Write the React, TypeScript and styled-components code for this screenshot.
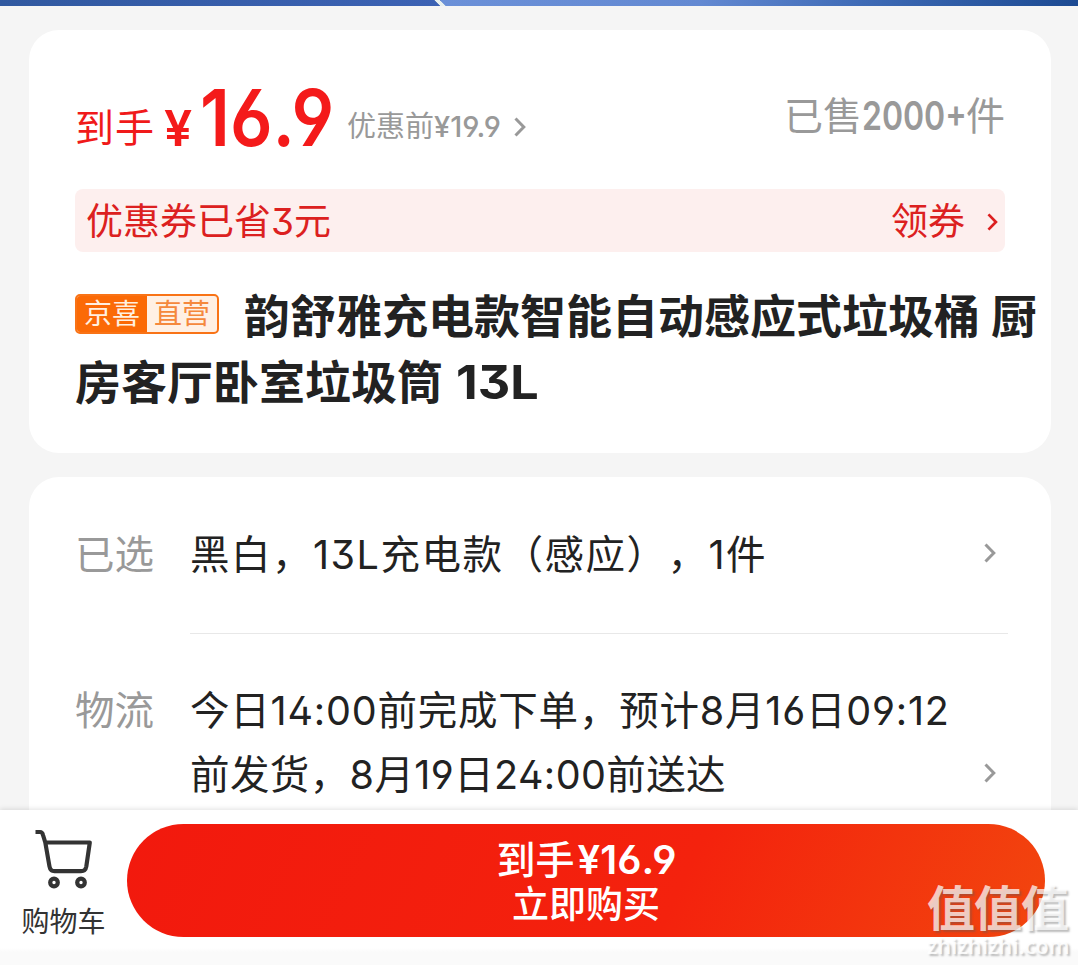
import React from "react"
import styled, { createGlobalStyle } from "styled-components"

const GlobalStyle = createGlobalStyle`
    body {
        margin: 0;
        font-family: Inter, "Noto Sans CJK SC", sans-serif;
        font-feature-settings: "ss01", "cv03", "cv04";
        text-spacing-trim: space-all;
        color: #222;
    }
    * {
        box-sizing: border-box;
    }
`
const Page = styled.div`
    display: flex;
    flex-direction: column;
    width: 1078px;
    height: 965px;
    overflow: hidden;
    position: relative;
    background-color: #f5f5f5;
`
const Banner = styled.div`
    flex: none;
    height: 6px;
    background:
        linear-gradient(45deg, transparent 34%, #e8f0ee 40%, #e8f0ee 60%, transparent 66%) 433px 0 / 14px 6px no-repeat,
        linear-gradient(90deg, #3159a0 0, #3c62b4 440px, #6b90d8 441px, #6389d2 700px, #3f6bb6 860px, #1c4a92 100%);
`
const Content = styled.main`
    flex: 1;
    min-height: 0;
    overflow: hidden;
    display: flex;
    flex-direction: column;
    gap: 24px;
    padding: 24px 27px 0 29px;
`
const Card = styled.section`
    flex: none;
    background-color: white;
    border-radius: 30px;
`
const PriceCard = styled(Card)`
    height: 423px;
    padding: 47px 0 0 46px;
`
const PriceRow = styled.div`
    display: flex;
    align-items: flex-start;
    width: 930px;
    height: 112px;
    line-height: 80px;
    white-space: nowrap;
`
const PriceLabel = styled.span`
    margin-top: 11px;
    font-size: 39px;
    letter-spacing: 1px;
    color: #f01a1a;
`
const Amount = styled.span<{ size: number; width: number; stretch: number; weight?: number }>`
    display: inline-block;
    width: ${props => props.width}px;
    font-size: ${props => props.size}px;
    font-weight: ${props => props.weight || 600};
    transform: scaleX(${props => props.stretch});
    transform-origin: left;
`
const Price = styled.span`
    display: flex;
    align-items: baseline;
    margin-left: 9px;
    color: #f41a1a;
`
const OldPrice = styled.span`
    display: flex;
    align-items: baseline;
    margin: 10px 0 0 11px;
    font-size: 29px;
    color: #999;
`
const Sold = styled.span`
    margin: -1px 0 0 auto;
    font-size: 39px;
    color: #999;
`
const Coupon = styled.div`
    display: flex;
    align-items: center;
    width: 930px;
    height: 63px;
    padding: 2px 7px 0 11px;
    border-radius: 8px;
    background-color: #fdefee;
    color: #dc2020;
    font-size: 37px;
    line-height: 63px;
`
const CouponAction = styled.span`
    display: flex;
    align-items: center;
    gap: 22px;
    margin-left: auto;
`
const Title = styled.h1`
    margin: 32px 0 0;
    font-size: 46px;
    font-weight: 700;
    line-height: 65px;
    white-space: nowrap;
`
const TitleTail = styled.span`
    margin-right: 2px;
`
const Badge = styled.span`
    display: inline-flex;
    width: 144px;
    height: 40px;
    margin-right: 25px;
    vertical-align: 9px;
    border: 2px solid #f97316;
    border-radius: 5px;
    overflow: hidden;
    background-color: #fff0e4;
    font-size: 28px;
    font-weight: 400;
    line-height: 37px;
`
const BadgePart = styled.span<{ filled?: boolean }>`
    flex: 1;
    text-align: center;
    color: ${props => (props.filled ? "#fff0e0" : "#f5883c")};
    background-color: ${props => (props.filled ? "#fb6a06" : "transparent")};
`
const OptionsCard = styled(Card)`
    height: 420px;
    padding: 46px 43px 0 46px;
`
const Option = styled.div<{ last?: boolean }>`
    display: grid;
    grid-template-columns: 115px 1fr;
    height: ${props => (props.last ? "200px" : "110px")};
    font-size: 39.5px;
    line-height: 64px;
`
const OptionName = styled.span`
    color: #999;
`
const OptionBody = styled.div`
    display: flex;
    align-items: flex-end;
    align-self: start;
    justify-content: space-between;
    white-space: nowrap;
`
const Line = styled.div<{ spacing: number }>`
    letter-spacing: ${props => props.spacing}px;
`
const Arrow = styled.span`
    display: flex;
    align-items: center;
    height: 64px;
    padding-right: 12px;
    padding-bottom: 5px;
`
const Divider = styled.hr`
    margin: 0 0 45px 115px;
    border: 0;
    height: 1px;
    background-color: #e8e8e8;
`
const BottomBar = styled.footer`
    flex: none;
    display: flex;
    height: 155px;
    padding: 14px 33px 0 0;
    background: linear-gradient(white 138px, #fafafa 142px);
    box-shadow: 0 -1px 5px rgba(0, 0, 0, .12);
`
const CartLink = styled.div`
    display: flex;
    flex-direction: column;
    align-items: center;
    width: 127px;
    padding-top: 3px;
    font-size: 28px;
    line-height: 36px;
    color: #333;
    svg {
        margin: 0 2px 15px 0;
    }
`
const BuyButton = styled.button`
    display: flex;
    flex-direction: column;
    align-items: center;
    flex: 1;
    height: 113px;
    padding: 13px 0 0;
    border: 0;
    border-radius: 57px;
    background: linear-gradient(115deg, #f2190d 0%, #f4220d 60%, #f2460e 100%);
    color: white;
    font-family: inherit;
    font-feature-settings: inherit;
    font-size: 37px;
    font-weight: 500;
    line-height: 45px;
`
const BuyPrice = styled.span`
    display: flex;
    font-size: 39px;
`
const Watermark = styled.div`
    position: absolute;
    left: 927px;
    top: 882px;
    width: 144px;
    color: rgba(255, 255, 255, .72);
    text-shadow: 2px 2px 2px rgba(90, 90, 90, .4);
    font-size: 48px;
    font-weight: 700;
    line-height: 54px;
    white-space: nowrap;
    letter-spacing: -1px;
`
const WatermarkSite = styled.div`
    font-family: "Open Sans", sans-serif;
    font-size: 21.5px;
    font-weight: 600;
    line-height: 20px;
    letter-spacing: .2px;
    color: rgba(255, 255, 255, .85);
`

interface ChevronProps {
    width: number
    height: number
    color: string
}

function Chevron({ width, height, color }: ChevronProps) {
    return (
        <svg width={width} height={height} viewBox="0 0 12 20" fill="none" stroke={color} strokeWidth="3">
            <path d="M1.5 1.5 L9.8 10 L1.5 18.5" />
        </svg>
    )
}

function CartIcon() {
    return (
        <svg width="60" height="62" viewBox="0 0 60 62" fill="none" stroke="#333" strokeWidth="4.2" strokeLinejoin="round">
            <path d="M2.5 5H7Q9.3 5 10 8L12.3 15.5L16.5 39.5Q17.4 44.2 21.5 44.2H48Q52.5 44.2 53.3 39.5L56.8 15.5H12.3" />
            <circle cx="21" cy="55.5" r="3.8" />
            <circle cx="48" cy="55.5" r="3.8" />
        </svg>
    )
}

export default function App() {
    return (
        <>
            <GlobalStyle />
            <Page>
                <Banner />
                <Content>
                    <PriceCard>
                        <PriceRow>
                            <PriceLabel>到手</PriceLabel>
                            <Price>
                                <Amount size={50} width={36} stretch={1}>¥</Amount>
                                <Amount size={79} width={136} stretch={0.895}>16.9</Amount>
                            </Price>
                            <OldPrice>
                                优惠前
                                <Amount size={29} width={80} stretch={1} weight={500}>¥19.9</Amount>
                                <Chevron width={12} height={20} color="#999" />
                            </OldPrice>
                            <Sold>
                                已售
                                <Amount size={39} width={104} stretch={0.82} weight={600}>2000+</Amount>
                                件
                            </Sold>
                        </PriceRow>
                        <Coupon>
                            优惠券已省3元
                            <CouponAction>
                                领券
                                <Chevron width={11} height={18} color="#dc2020" />
                            </CouponAction>
                        </Coupon>
                        <Title>
                            <Badge>
                                <BadgePart filled>京喜</BadgePart>
                                <BadgePart>直营</BadgePart>
                            </Badge>
                            韵舒雅充电款智能自动感应式垃圾桶 厨
                            <br />
                            <TitleTail>房客厅卧室垃圾筒 </TitleTail>
                            <Amount size={47} width={82} stretch={1.07} weight={700}>13L</Amount>
                        </Title>
                    </PriceCard>
                    <OptionsCard>
                        <Option>
                            <OptionName>已选</OptionName>
                            <OptionBody>
                                <Line spacing={1.5}>黑白，13L充电款（感应），1件</Line>
                                <Arrow><Chevron width={12} height={20} color="#999" /></Arrow>
                            </OptionBody>
                        </Option>
                        <Divider />
                        <Option last>
                            <OptionName>物流</OptionName>
                            <OptionBody>
                                <div>
                                    <Line spacing={0.8}>今日14:00前完成下单，预计8月16日09:12</Line>
                                    <Line spacing={0.4}>前发货，8月19日24:00前送达</Line>
                                </div>
                                <Arrow><Chevron width={12} height={20} color="#999" /></Arrow>
                            </OptionBody>
                        </Option>
                    </OptionsCard>
                </Content>
                <BottomBar>
                    <CartLink>
                        <CartIcon />
                        购物车
                    </CartLink>
                    <BuyButton>
                        <BuyPrice>
                            到手
                            <Amount size={39} width={101} stretch={1.03}>¥16.9</Amount>
                        </BuyPrice>
                        <span>立即购买</span>
                    </BuyButton>
                </BottomBar>
                <Watermark>
                    值值值
                    <WatermarkSite>zhizhizhi.com</WatermarkSite>
                </Watermark>
            </Page>
        </>
    )
}
